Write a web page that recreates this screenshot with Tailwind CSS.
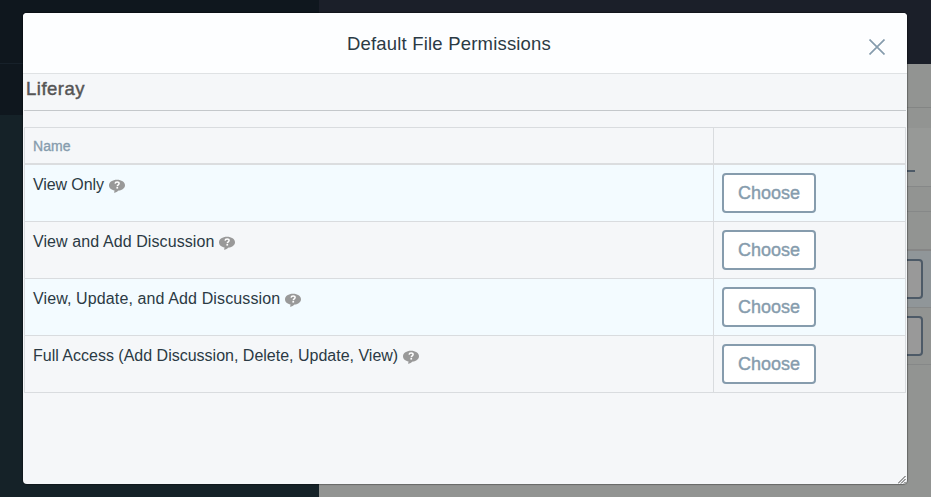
<!DOCTYPE html>
<html lang="en">
<head>
<meta charset="utf-8">
<title>Default File Permissions</title>
<script src="https://cdn.jsdelivr.net/npm/@tailwindcss/browser@4"></script>
</head>
<body class="relative h-[497px] w-[931px] overflow-hidden font-['Liberation_Sans',Arial,sans-serif] text-[#2b3a44]">
<svg class="hidden">
  <symbol id="help" viewBox="0 0 16 14">
    <path d="M8 0.8C3.6 0.8 0 3.1 0 6.2c0 2.7 2.3 4.7 5.6 5.3L5 13.8c2-.2 3.4-1 4.6-2.2 3.8-.5 6.4-2.7 6.4-5.4C16 3.1 12.4 0.8 8 0.8z" fill="#999"/>
    <path d="M6.1 4.6c.1-1.1.9-1.7 2-1.7s2 .7 2 1.6c0 1.4-1.8 1.4-1.8 2.7" fill="none" stroke="#fff" stroke-width="1.5"/>
    <rect x="7.4" y="8" width="1.7" height="1.6" fill="#fff"/>
  </symbol>
</svg>

<div class="flex h-full">
  <aside class="flex w-[319px] flex-col bg-[#152228]">
    <div class="h-[64px] border-b border-[#17212a] bg-[#0f171e]"></div>
    <div class="h-[51px] bg-[#0f171e]"></div>
  </aside>
  <main class="flex flex-1 flex-col bg-[#929492]">
    <div class="h-[64px] bg-[#1b1f29]"></div>
    <div class="h-[44px] border-b border-[#838584]"></div>
    <div class="h-[20px] bg-[#929492]"></div>
    <div class="flex h-[59px] items-end justify-end border-b border-[#868888] bg-[#979997] pr-4 pb-[14px]"><div class="h-[2px] w-[40px] bg-[#4d5a67]"></div></div>
    <div class="h-[25px] border-b border-[#868888]"></div>
    <div class="h-[39px] border-b-2 border-[#868686]"></div>
    <div class="flex h-[57px] justify-end border-b border-[#868888] bg-[#909699] pt-2 pr-2"><div class="h-[40px] w-[94px] rounded border-2 border-[#4d5a67] bg-[#999]"></div></div>
    <div class="flex h-[57px] justify-end border-b border-[#868888] pt-2 pr-2"><div class="h-[40px] w-[94px] rounded border-2 border-[#4d5a67] bg-[#999]"></div></div>
  </main>
</div>

<section class="absolute top-[13px] left-[23px] flex h-[471px] w-[884px] flex-col overflow-hidden rounded-[4px] bg-[#f5f7f9] shadow-[0_0_1px_1px_rgba(0,0,0,0.3)]">
  <header class="flex h-[61px] shrink-0 items-center border-b border-[#dfe2e4] bg-[#fdfeff] pl-[324px]">
    <h1 class="pt-[2px] text-[18.5px] leading-[22px] tracking-[0.19px] whitespace-nowrap">Default File Permissions</h1>
    <button class="mt-[7px] mr-[22px] ml-auto"><svg class="size-4" viewBox="0 0 16 16" fill="none" stroke="#869cad" stroke-width="1.7"><path d="M.5.5l15 15M15.5.5l-15 15"/></svg></button>
  </header>
  <div class="px-px">
    <h2 class="mb-4 h-[37px] border-b border-[#c4c8cb] pt-[3px] pl-[2px] text-[18.5px] leading-[23px] tracking-[0.5px] text-[#555] [-webkit-text-stroke:0.45px_#555]">Liferay</h2>
    <div class="border border-[#d9dcdf]">
      <div class="grid h-[37px] grid-cols-[689px_1fr] border-b-2 border-[#dbdddf]">
        <div class="border-r border-[#d9dcdf] pt-[9px] pl-2 text-[14px] leading-[18px] tracking-[0.1px] text-[#869cad] [-webkit-text-stroke:0.35px_#869cad]">Name</div><div></div>
      </div>
      <div class="grid h-[57px] grid-cols-[689px_1fr] border-b border-[#d9dcdf] bg-[#f3fbff]">
        <div class="flex items-start border-r border-[#d9dcdf] pt-[10px] pl-2 text-[16px] leading-[20px]"><span class="tracking-[-0.1px]">View Only</span><svg class="mt-1 ml-[5px] h-[14px] w-4"><use href="#help"/></svg></div>
        <div class="pt-2 pl-2"><button class="h-[40px] w-[94px] rounded border-2 border-[#869cad] bg-white text-[18px] text-[#869cad] [-webkit-text-stroke:0.4px_#869cad]">Choose</button></div>
      </div>
      <div class="grid h-[57px] grid-cols-[689px_1fr] border-b border-[#d9dcdf]">
        <div class="flex items-start border-r border-[#d9dcdf] pt-[10px] pl-2 text-[16px] leading-[20px]"><span class="tracking-[0.09px]">View and Add Discussion</span><svg class="mt-1 ml-[5px] h-[14px] w-4"><use href="#help"/></svg></div>
        <div class="pt-2 pl-2"><button class="h-[40px] w-[94px] rounded border-2 border-[#869cad] bg-white text-[18px] text-[#869cad] [-webkit-text-stroke:0.4px_#869cad]">Choose</button></div>
      </div>
      <div class="grid h-[57px] grid-cols-[689px_1fr] border-b border-[#d9dcdf] bg-[#f3fbff]">
        <div class="flex items-start border-r border-[#d9dcdf] pt-[10px] pl-2 text-[16px] leading-[20px]"><span class="tracking-[0.12px]">View, Update, and Add Discussion</span><svg class="mt-1 ml-[5px] h-[14px] w-4"><use href="#help"/></svg></div>
        <div class="pt-2 pl-2"><button class="h-[40px] w-[94px] rounded border-2 border-[#869cad] bg-white text-[18px] text-[#869cad] [-webkit-text-stroke:0.4px_#869cad]">Choose</button></div>
      </div>
      <div class="grid h-[56px] grid-cols-[689px_1fr]">
        <div class="flex items-start border-r border-[#d9dcdf] pt-[10px] pl-2 text-[16px] leading-[20px]"><span class="tracking-[0px]">Full Access (Add Discussion, Delete, Update, View)</span><svg class="mt-1 ml-[5px] h-[14px] w-4"><use href="#help"/></svg></div>
        <div class="pt-2 pl-2"><button class="h-[40px] w-[94px] rounded border-2 border-[#869cad] bg-white text-[18px] text-[#869cad] [-webkit-text-stroke:0.4px_#869cad]">Choose</button></div>
      </div>
    </div>
  </div>
  <svg class="absolute right-px bottom-0 size-[8px]" viewBox="0 0 8 8" stroke="#444" stroke-width="1"><path d="M0 7.5L7.5 0M3 7.5L7.5 3M6 7.5L7.5 6"/></svg>
</section>
</body>
</html>
